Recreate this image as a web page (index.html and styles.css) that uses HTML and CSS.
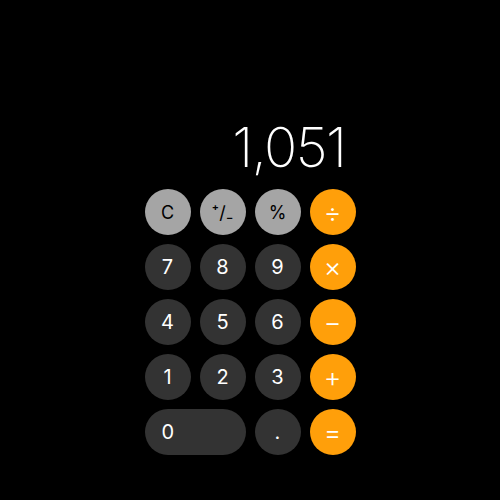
FILE: index.html
```html
<!DOCTYPE html>
<html>
<head>
<meta charset="utf-8">
<link rel="stylesheet" href="styles.css">
</head>
<body>
<div class="calc">
  <div class="display">1,051</div>
  <div class="keys">
    <button class="key fn">C</button>
    <button class="key fn">⁺/₋</button>
    <button class="key fn">%</button>
    <button class="key op">÷</button>
    <button class="key num">7</button>
    <button class="key num">8</button>
    <button class="key num">9</button>
    <button class="key op">×</button>
    <button class="key num">4</button>
    <button class="key num">5</button>
    <button class="key num">6</button>
    <button class="key op">−</button>
    <button class="key num">1</button>
    <button class="key num">2</button>
    <button class="key num">3</button>
    <button class="key op">+</button>
    <button class="key num zero">0</button>
    <button class="key num">.</button>
    <button class="key op">=</button>
  </div>
</div>
</body>
</html>
```
FILE: styles.css
```css
html, body {
  margin: 0;
  padding: 0;
  background: #000;
  width: 500px;
  height: 500px;
  overflow: hidden;
}
.calc {
  width: 211px;
  margin: 0 auto;
  padding-top: 115px;
  font-family: "Inter", "Liberation Sans", sans-serif;
}
.display {
  color: #fff;
  font-size: 55px;
  font-weight: 200;
  text-align: right;
  line-height: 64px;
  height: 64px;
  padding-right: 10px;
  margin-bottom: 10px;
  letter-spacing: -1.5px;
}
.keys {
  display: grid;
  grid-template-columns: repeat(4, 46px);
  grid-auto-rows: 46px;
  gap: 9px;
}
.key {
  border: none;
  border-radius: 23px;
  padding: 0;
  margin: 0;
  font-family: "Inter", "Liberation Sans", sans-serif;
  font-size: 20px;
  font-weight: 400;
  display: flex;
  align-items: center;
  justify-content: center;
}
.fn {
  background: #a5a5a5;
  color: #000;
  font-size: 18px;
}
.num {
  background: #333333;
  color: #fff;
}
.op {
  background: #ff9f0a;
  color: #fff;
  font-size: 27px;
  font-weight: 300;
}
.zero {
  grid-column: span 2;
  justify-content: flex-start;
  padding-left: 17px;
}
```
